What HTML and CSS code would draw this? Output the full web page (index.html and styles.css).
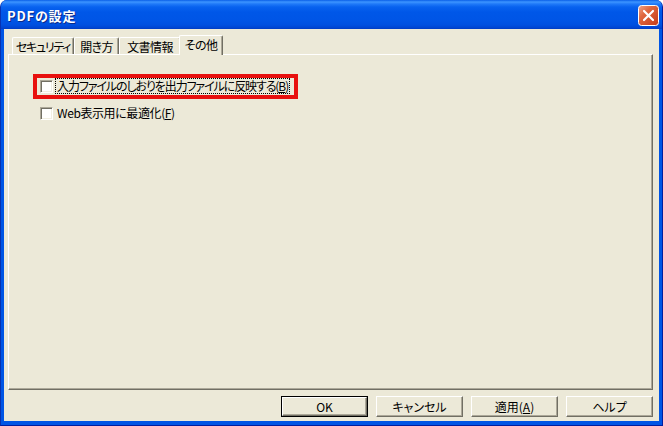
FILE: index.html
```html
<!DOCTYPE html>
<html lang="ja">
<head>
<meta charset="utf-8">
<title>PDFの設定</title>
<link rel="stylesheet" href="styles.css">
</head>
<body>
<div class="window">
  <div class="titlebar">
    <span class="title">PDFの設定</span>
    <span class="close" aria-label="閉じる">
      <svg width="21" height="21" viewBox="0 0 21 21">
        <defs>
          <linearGradient id="cg" x1="0" y1="0" x2="1" y2="1">
            <stop offset="0" stop-color="#F0A58A"/>
            <stop offset="0.35" stop-color="#E0683F"/>
            <stop offset="1" stop-color="#C23A18"/>
          </linearGradient>
        </defs>
        <rect x="0.5" y="0.5" width="20" height="20" rx="3" fill="url(#cg)" stroke="#FFFFFF"/>
        <path d="M6 6 L15 15 M15 6 L6 15" stroke="#FFFFFF" stroke-width="2.2" stroke-linecap="round"/>
      </svg>
    </span>
  </div>
  <div class="client">
    <div class="tabs">
      <div class="tab w1">セキュリティ</div>
      <div class="tab w2">開き方</div>
      <div class="tab w3">文書情報</div>
      <div class="tab w4 selected">その他</div>
    </div>
    <div class="panel">
      <div class="option marked">
        <span class="checkbox"></span>
        <span class="label long focused">入力ファイルのしおりを出力ファイルに反映する(<u>B</u>)</span>
        <span class="mark"></span>
      </div>
      <div class="option">
        <span class="checkbox"></span>
        <span class="label">Web表示用に最適化(<u>F</u>)</span>
      </div>
    </div>
    <div class="buttons">
      <div class="btn default"><span class="btn-face">OK</span></div>
      <div class="btn"><span class="btn-face">キャンセル</span></div>
      <div class="btn"><span class="btn-face">適用(<u>A</u>)</span></div>
      <div class="btn"><span class="btn-face">ヘルプ</span></div>
    </div>
  </div>
</div>
</body>
</html>
```
FILE: styles.css
```css
* { box-sizing: border-box; }

html, body {
  margin: 0;
  padding: 0;
  background: #FFFFFF;
}

body {
  width: 663px;
  height: 426px;
  overflow: hidden;
  font-family: "Noto Sans CJK JP", "Liberation Sans", sans-serif;
  font-size: 12px;
  color: #000000;
  font-feature-settings: "palt" 1;
}

.window {
  width: 663px;
  height: 426px;
  display: flex;
  flex-direction: column;
  background: #0055E5;
  border-radius: 7px 7px 0 0;
  overflow: hidden;
  border-left: 1px solid #0831B0;
  border-right: 1px solid #001EA0;
  border-bottom: 1px solid #001EA0;
}

.titlebar {
  height: 29px;
  flex: none;
  display: flex;
  align-items: center;
  justify-content: space-between;
  padding: 0 3px 0 6px;
  background: linear-gradient(to bottom,
    #0A5FE8 0px, #3D95FF 2px, #1F79F8 4px, #0862EF 7px,
    #0057E8 12px, #0055E6 20px, #0050E0 25px, #0044D0 28px, #003BC0 29px);
}

.title {
  color: #FFFFFF;
  font-weight: bold;
  font-size: 13px;
  letter-spacing: 0.8px;
  text-shadow: 1px 1px 0 #0A2A8A;
  padding-top: 1px;
}

.close {
  display: block;
  width: 21px;
  height: 21px;
  margin-top: 2px;
}

.close svg { display: block; }

.client {
  flex: 1;
  margin: 0 3px 4px 3px;
  background: #ECE9D8;
  display: flex;
  flex-direction: column;
  padding: 6px 6px 4px 4px;
}

.tabs {
  height: 19px;
  display: flex;
  align-items: flex-end;
  padding-left: 4px;
  position: relative;
  z-index: 1;
}

.tab {
  height: 17px;
  display: flex;
  align-items: center;
  justify-content: center;
  background: #ECE9D8;
  border-top: 1px solid #FFFFFF;
  border-left: 1px solid #FFFFFF;
  border-right: 1px solid #716F64;
  box-shadow: inset -1px 0 0 #ACA899;
  border-radius: 2px 2px 0 0;
  padding-top: 1px;
  white-space: nowrap;
  letter-spacing: -0.6px;
}

.w1 { width: 62px; letter-spacing: -1.3px; }
.w2 { width: 45px; }
.w3 { width: 62px; }
.w4 { width: 40px; }

.tab.selected {
  width: 44px;
  height: 20px;
  margin-left: -2px;
  margin-bottom: -1px;
  padding-top: 0;
  padding-bottom: 2px;
}

.panel {
  height: 336px;
  flex: none;
  background: #ECE9D8;
  border-top: 1px solid #FFFFFF;
  border-left: 1px solid #FFFFFF;
  border-right: 1px solid #716F64;
  border-bottom: 1px solid #716F64;
  box-shadow: inset -1px -1px 0 #ACA899;
  padding: 24px 0 0 31px;
  display: flex;
  flex-direction: column;
  align-items: flex-start;
  gap: 13px;
}

.option {
  height: 14px;
  display: inline-flex;
  align-items: center;
  gap: 3px;
}

.option.marked { position: relative; }

.checkbox {
  width: 13px;
  height: 13px;
  flex: none;
  background: #FFFFFF;
  border-top: 1px solid #ACA899;
  border-left: 1px solid #ACA899;
  border-right: 1px solid #FFFFFF;
  border-bottom: 1px solid #FFFFFF;
  box-shadow: inset 1px 1px 0 #716F64, inset -1px -1px 0 #F1EFE2;
}

.label {
  height: 14px;
  line-height: 14px;
  padding: 0 1px;
  white-space: nowrap;
  letter-spacing: -0.4px;
}

.label.long {
  letter-spacing: -1.1px;
}

.label.focused {
  outline: 1px dotted #000000;
  outline-offset: 0;
}

.mark {
  position: absolute;
  left: -7px;
  top: -5px;
  right: -9px;
  bottom: -6px;
  border: 4px solid #E8100E;
}

.buttons {
  margin-top: 6px;
  display: flex;
  justify-content: flex-end;
  gap: 8px;
}

.btn {
  width: 87px;
  height: 21px;
  display: flex;
  background: #ECE9D8;
}

.btn-face {
  flex: 1;
  display: flex;
  align-items: center;
  justify-content: center;
  border-top: 1px solid #FFFFFF;
  border-left: 1px solid #FFFFFF;
  border-right: 1px solid #716F64;
  border-bottom: 1px solid #716F64;
  box-shadow: inset -1px -1px 0 #ACA899;
  white-space: nowrap;
}

.btn.default {
  border: 1px solid #000000;
}
```
